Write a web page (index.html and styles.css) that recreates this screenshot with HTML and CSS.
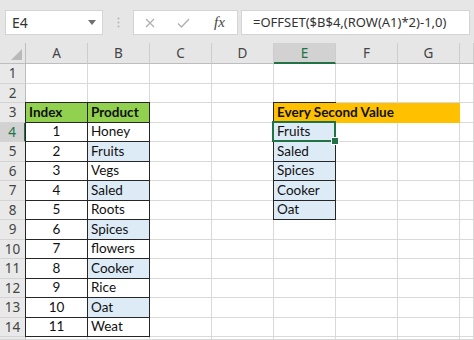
FILE: index.html
```html
<!DOCTYPE html>
<html lang="en">
<head>
    <meta charset="UTF-8">
    <title>Every Second Value</title>
    <link rel="stylesheet" href="styles.css">
</head>
<body>
<div class="toolbar">
    <div class="namebox">
        <span>E4</span>
        <svg width="8" height="5" viewBox="0 0 8 5"><path d="M0 0h8L4 5z" fill="#6f6f6f"/></svg>
    </div>
    <div class="grip">
        <svg width="3" height="11" viewBox="0 0 3 11"><circle cx="1.5" cy="1.5" r="1" fill="#b5b5b5"/><circle cx="1.5" cy="5.5" r="1" fill="#b5b5b5"/><circle cx="1.5" cy="9.5" r="1" fill="#b5b5b5"/></svg>
    </div>
    <div class="fxbox">
        <svg class="cancel" width="10" height="10" viewBox="0 0 10 10"><path d="M1 1l8 8M9 1l-8 8" stroke="#b0b0b0" stroke-width="1.3"/></svg>
        <svg class="enter" width="13" height="10" viewBox="0 0 13 10"><path d="M1 5.5l3.5 3.5L12 1" stroke="#b0b0b0" stroke-width="1.4" fill="none"/></svg>
        <span class="fx">fx</span>
    </div>
    <div class="formula">=OFFSET($B$4,(ROW(A1)*2)-1,0)</div>
</div>
<div class="sheet" id="sheet"></div>
<script>
    var sheet = document.getElementById("sheet");
    var cols = ["A", "B", "C", "D", "E", "F", "G", ""];
    var products = ["Honey", "Fruits", "Vegs", "Saled", "Roots", "Spices", "flowers", "Cooker", "Rice", "Oat", "Weat"];
    var picked = ["Fruits", "Saled", "Spices", "Cooker", "Oat"];

    function add(cls, text) {
        var div = document.createElement("div");
        div.className = cls;
        if (text !== "") {
            var span = document.createElement("span");
            span.innerHTML = text;
            div.appendChild(span);
        }
        sheet.appendChild(div);
        return div;
    }

    //列标题
    var corner = add("corner", "");
    corner.innerHTML = '<svg width="11" height="11" viewBox="0 0 11 11"><path d="M11 0v11H0z" fill="#b9b9b9"/></svg>';
    for (var i = 0; i < cols.length; i++) {
        add(cols[i] == "E" ? "colhead sel" : "colhead", cols[i]);
    }

    //行 (第15行只露出一点, 不写行号)
    for (var r = 1; r <= 15; r++) {
        add(r == 4 ? "rowhead sel" : "rowhead", r < 15 ? r : "");
        for (var c = 0; c < cols.length; c++) {
            var col = cols[c];
            var cls = "cell";
            var text = "";
            if (r == 3) {
                if (col == "A") { cls += " b head"; text = "Index"; }
                if (col == "B") { cls += " b head"; text = "Product"; }
                if (col == "E") { cls += " b title"; text = "Every Second Value"; }
                if (col == "F" || col == "G") { cls += " orange"; }
            }
            if (r >= 4 && r <= 14) {
                if (col == "A") { cls += " b num"; text = r - 3; }
                if (col == "B") {
                    cls += " b";
                    if ((r - 4) % 2 == 1) cls += " blue";
                    text = products[r - 4];
                }
            }
            if (r >= 4 && r <= 8 && col == "E") {
                cls += " b blue";
                if (r == 4) cls += " active";
                text = picked[r - 4];
            }
            add(cls, text);
        }
    }
</script>
</body>
</html>
```

FILE: styles.css
```css
* {
    margin: 0;
    padding: 0;
    box-sizing: border-box;
}

body {
    width: 474px;
    height: 340px;
    overflow: hidden;
    background-color: #fff;
    font-family: "Noto Sans", "Open Sans", sans-serif;
}

/* 编辑栏 */
.toolbar {
    height: 43px;
    padding: 10px 4px 0 5px;
    background-color: #e6e6e6;
    display: flex;
    align-items: flex-start;
}

.namebox {
    width: 98px;
    height: 25px;
    padding: 0 6px 0 6px;
    background-color: #fff;
    border: 1px solid #d4d4d4;
    font-size: 14px;
    color: #333;
    display: flex;
    align-items: center;
    justify-content: space-between;
}

.grip {
    width: 30px;
    height: 25px;
    display: flex;
    align-items: center;
    justify-content: center;
}

.fxbox {
    width: 105px;
    height: 25px;
    padding-left: 11px;
    background-color: #fff;
    border: 1px solid #d4d4d4;
    display: flex;
    align-items: center;
}

.fxbox .enter {
    margin-left: 22px;
}

.fx {
    margin-left: 24px;
    font-family: "Liberation Serif", serif;
    font-style: italic;
    font-size: 15px;
    color: #444;
}

.formula {
    flex: 1;
    height: 25px;
    margin-left: 3px;
    padding-left: 11px;
    background-color: #fff;
    border: 1px solid #d4d4d4;
    font-size: 13px;
    line-height: 23px;
    color: #333;
    white-space: nowrap;
}

/* 表格 */
.sheet {
    height: 297px;
    display: grid;
    grid-template-columns: 26px repeat(7, 62px) 1fr;
    grid-template-rows: 21px repeat(14, 19.5px) 1fr;
}

.corner {
    background-color: #e6e6e6;
    border-right: 1px solid #bdbdbd;
    border-bottom: 1px solid #bdbdbd;
    padding: 0 3px 3px 0;
    display: flex;
    align-items: flex-end;
    justify-content: flex-end;
}

.colhead {
    background-color: #e6e6e6;
    border-right: 1px solid #cdcdcd;
    border-bottom: 1px solid #bdbdbd;
    font-size: 13.5px;
    line-height: 20px;
    color: #444;
    text-align: center;
}

.colhead.sel {
    background-color: #d2d2d2;
    border-bottom: 2px solid #217346;
    color: #217346;
}

.rowhead {
    background-color: #e9e9e9;
    border-right: 1px solid #bdbdbd;
    border-bottom: 1px solid #d4d4d4;
    font-size: 13.5px;
    color: #444;
    display: flex;
    align-items: center;
    justify-content: center;
}

.rowhead.sel {
    background-color: #d2d2d2;
    border-right: 2px solid #217346;
    color: #217346;
}

.cell {
    padding: 0 3px 2px 3px;
    border-right: 1px solid #d9d9d9;
    border-bottom: 1px solid #d9d9d9;
    font-family: "Lato", "Open Sans", sans-serif;
    font-size: 13.5px;
    line-height: 16px;
    color: #111;
    white-space: nowrap;
    display: flex;
    align-items: flex-end;
}

.b {
    border-color: #262626;
    box-shadow: -1px 0 0 #262626, 0 -1px 0 #262626, -1px -1px 0 #262626;
}

.head {
    background-color: #92d050;
    font-weight: 700;
}

.num {
    justify-content: center;
}

.blue {
    background-color: #ddebf7;
}

.title {
    background-color: #ffc000;
    border-right-color: #ffc000;
    font-weight: 700;
}

.title span {
    position: relative;
    z-index: 1;
}

.orange {
    background-color: #ffc000;
    border-color: #ffc000;
}

/* 选中单元格 */
.active {
    position: relative;
}

.active::after {
    content: "";
    position: absolute;
    left: -2px;
    top: -2px;
    right: -1px;
    bottom: -1px;
    border: 2px solid #217346;
}

.active::before {
    content: "";
    position: absolute;
    right: -4px;
    bottom: -4px;
    width: 6px;
    height: 6px;
    background-color: #217346;
    border: 1px solid #fff;
    z-index: 1;
}
```
